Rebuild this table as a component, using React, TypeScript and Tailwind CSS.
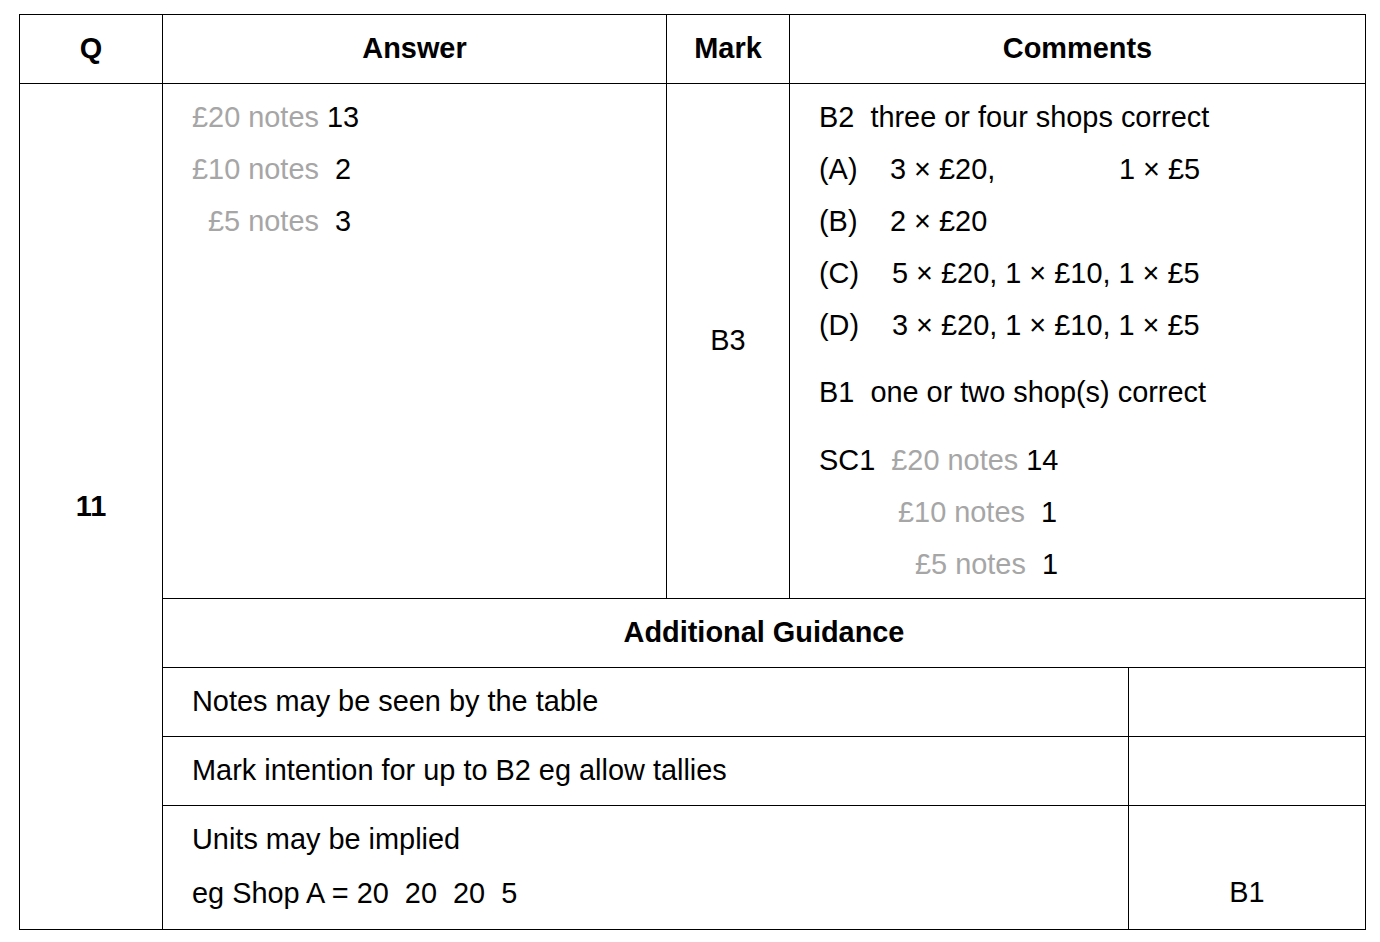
export default function App() {
  const cell = 'border-r border-b border-black';
  const grey = 'text-[#a6a6a6]';
  const centred = `${cell} flex items-center justify-center pb-[1px]`;
  return (
    <div className="min-h-screen bg-white text-black font-['Liberation_Sans',Arial,sans-serif] text-[28.9px] pt-[14px] pl-[19px]">
      <div className="grid w-[1347px] grid-cols-[143px_504px_123px_339px_237px] grid-rows-[69px_515px_69px_69px_69px_124px] border-l border-t border-black">
        {/* Header */}
        <div className={`${centred} font-bold`}>Q</div>
        <div className={`${centred} font-bold`}>Answer</div>
        <div className={`${centred} font-bold`}>Mark</div>
        <div className={`${centred} col-span-2 font-bold`}>Comments</div>

        {/* Question number spans all body rows */}
        <div className={`${cell} row-span-5 flex items-center justify-center font-bold`}>11</div>

        {/* Answer */}
        <div className={`${cell} pl-[29px] pt-[7px] leading-[52px] whitespace-pre`}>
          <div><span className={grey}>£20 notes</span> 13</div>
          <div><span className={grey}>£10 notes</span>  2</div>
          <div><span className={grey}>  £5 notes</span>  3</div>
        </div>

        {/* Mark */}
        <div className={centred}>B3</div>

        {/* Comments */}
        <div className={`${cell} col-span-2 pl-[29px] pt-[7px] leading-[52px] whitespace-pre`}>
          <div>B2  three or four shops correct</div>
          <div className="flex">
            <span className="w-[71px]">(A)</span>
            <span className="w-[229px]">3 × £20,</span>
            <span>1 × £5</span>
          </div>
          <div className="flex">
            <span className="w-[71px]">(B)</span>
            <span>2 × £20</span>
          </div>
          <div className="flex">
            <span className="w-[73px]">(C)</span>
            <span>5 × £20, 1 × £10, 1 × £5</span>
          </div>
          <div className="flex">
            <span className="w-[73px]">(D)</span>
            <span>3 × £20, 1 × £10, 1 × £5</span>
          </div>
          <div className="mt-[15px]">B1  one or two shop(s) correct</div>
          <div className="mt-[16px]">
            SC1  <span className={grey}>£20 notes</span> 14
          </div>
          <div className="pl-[79px]">
            <span className={grey}>£10 notes</span>  1
          </div>
          <div className="pl-[96px]">
            <span className={grey}>£5 notes</span>  1
          </div>
        </div>

        {/* Additional guidance */}
        <div className={`${centred} col-span-4 font-bold`}>Additional Guidance</div>

        <div className={`${cell} col-span-3 flex items-center pl-[29px] pb-[1px]`}>Notes may be seen by the table</div>
        <div className={cell}></div>

        <div className={`${cell} col-span-3 flex items-center pl-[29px] pb-[1px]`}>Mark intention for up to B2 eg allow tallies</div>
        <div className={cell}></div>

        <div className={`${cell} col-span-3 pl-[29px] pt-[7px] leading-[52px] whitespace-pre`}>
          <div>Units may be implied</div>
          <div className="mt-[2px]">eg Shop A = 20  20  20  5</div>
        </div>
        <div className={`${cell} flex flex-col justify-end items-center pb-[11px] leading-[52px]`}>B1</div>
      </div>
    </div>
  );
}
